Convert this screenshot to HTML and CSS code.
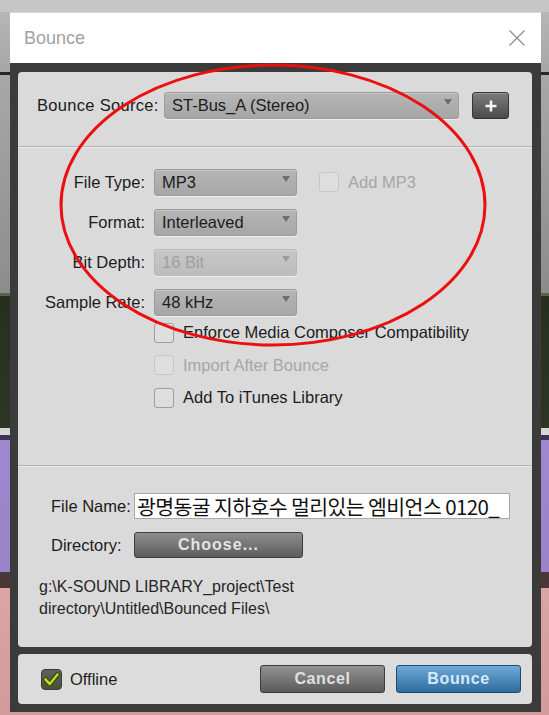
FILE: index.html
```html
<!DOCTYPE html>
<html lang="en">
<head>
<meta charset="utf-8">
<title>Bounce</title>
<link rel="stylesheet" href="styles.css">
</head>
<body>
<div class="window">
  <div class="titlebar">
    <span class="title">Bounce</span>
    <svg class="close" width="18" height="18" viewBox="0 0 18 18" aria-hidden="true">
      <path d="M1.5 1.5 L16.5 16.5 M16.5 1.5 L1.5 16.5" stroke="#8e8e8e" stroke-width="1.3" fill="none"/>
    </svg>
  </div>
  <div class="frame">
    <div class="panel">
      <section class="sec sec-source">
        <span class="src-label">Bounce Source:</span>
        <div class="select select-source"><span>ST-Bus_A (Stereo)</span><i class="arrow"></i></div>
        <button class="plus" type="button" aria-label="Add">
          <svg width="12" height="12" viewBox="0 0 12 12"><path d="M6 0.5 V11.5 M0.5 6 H11.5" stroke="#f4f4f4" stroke-width="2.6"/></svg>
        </button>
      </section>

      <section class="sec sec-format">
        <div class="grid">
          <span class="label">File Type:</span>
          <div class="select"><span>MP3</span><i class="arrow"></i></div>
          <label class="check check-inline disabled"><span class="box"></span>Add MP3</label>

          <span class="label">Format:</span>
          <div class="select"><span>Interleaved</span><i class="arrow"></i></div>
          <span></span>

          <span class="label">Bit Depth:</span>
          <div class="select is-disabled"><span>16 Bit</span><i class="arrow"></i></div>
          <span></span>

          <span class="label">Sample Rate:</span>
          <div class="select"><span>48 kHz</span><i class="arrow"></i></div>
          <span></span>
        </div>
        <div class="checks">
          <label class="check"><span class="box"></span>Enforce Media Composer Compatibility</label>
          <label class="check disabled"><span class="box"></span>Import After Bounce</label>
          <label class="check"><span class="box"></span>Add To iTunes Library</label>
        </div>
      </section>

      <section class="sec sec-file">
        <div class="file-row">
          <span class="file-label">File Name:</span>
          <div class="text-field">광명동굴 지하호수 멀리있는 엠비언스 0120_</div>
        </div>
        <div class="file-row">
          <span class="file-label">Directory:</span>
          <button class="btn btn-choose" type="button">Choose...</button>
        </div>
        <p class="path">g:\K-SOUND LIBRARY_project\Test<br>directory\Untitled\Bounced Files\</p>
      </section>
    </div>

    <div class="footer">
      <label class="offline">
        <span class="offline-box">
          <svg width="21" height="21" viewBox="0 0 21 21"><path d="M4.5 10.5 L8.8 15 L16.5 5.5" stroke="#2c3410" stroke-width="4.4" fill="none" stroke-linecap="round" stroke-linejoin="round"/><path d="M4.5 10.5 L8.8 15 L16.5 5.5" stroke="#b6e21c" stroke-width="2.6" fill="none" stroke-linecap="round" stroke-linejoin="round"/></svg>
        </span>
        Offline
      </label>
      <div class="actions">
        <button class="btn btn-cancel" type="button">Cancel</button>
        <button class="btn btn-bounce" type="button">Bounce</button>
      </div>
    </div>
  </div>
</div>

<svg class="annotation" width="549" height="715" viewBox="0 0 549 715" aria-hidden="true">
  <ellipse cx="273" cy="205" rx="212" ry="140" fill="none" stroke="#ec0f0f" stroke-width="3"/>
</svg>
</body>
</html>
```

FILE: styles.css
```css
* { box-sizing: border-box; }

html, body { margin: 0; }

body {
  position: relative;
  width: 549px;
  height: 715px;
  overflow: hidden;
  padding: 12px 8px 3px 10px;
  font-family: "Liberation Sans", Arial, sans-serif;
  font-size: 16.5px;
  color: #1c1c1c;
  /* session tracks peeking out behind the dialog */
  background: linear-gradient(to bottom,
    #c6c6c6 0 12px,
    #b6b6b6 12px, #a6a6a6 72px,
    #262626 72px 75px,
    #a8a8a8 75px, #8c8c8c 293px,
    #5a6450 293px 296px,
    #27301f 296px, #2d3525 428px,
    #d6d6d6 428px 435px,
    #3e3258 435px 440px,
    #9f88cf 440px, #9a83c8 572px,
    #4a3636 572px 588px,
    #dba5a5 588px, #d39a9a 715px);
}

.window {
  width: 531px;
  height: 700px;
  display: flex;
  flex-direction: column;
}

.titlebar {
  height: 51px;
  flex: none;
  background: #ffffff;
  border-top: 1px solid #d8d8d8;
  display: flex;
  align-items: center;
  justify-content: space-between;
  padding: 0 15px 0 14px;
}

.title {
  font-size: 18px;
  color: #a2a2a2;
}

.frame {
  flex: 1;
  background: #3b3b3b;
  padding: 9px 9px 8px 8px;
  display: flex;
  flex-direction: column;
  gap: 7px;
}

.panel {
  height: 575px;
  background: #dadada;
  border-radius: 4px;
}

.sec { border-bottom: 1px solid #b2b2b2; box-shadow: 0 1px 0 #ececec; }
.sec-file { border-bottom: 0; box-shadow: none; }

/* bounce source row */
.sec-source {
  height: 75px;
  padding: 20px 0 0 19px;
  display: flex;
  align-items: flex-start;
}
.src-label {
  width: 127px;
  line-height: 27px;
  letter-spacing: 0.3px;
}

.select {
  position: relative;
  height: 26.5px;
  width: 143px;
  padding: 0 20px 0 7px;
  display: flex;
  align-items: center;
  background: linear-gradient(#b6b6b6, #a6a6a6);
  border: 1px solid #9c9c9c;
  border-radius: 3px;
  box-shadow: inset 0 1px 0 rgba(255,255,255,.25), 0 1px 0 rgba(255,255,255,.55);
  color: #1c1c1c;
  white-space: nowrap;
}
.select-source { width: 295px; height: 27px; }
.select.is-disabled { background: linear-gradient(#c6c6c6, #bdbdbd); border-color: #b8b8b8; color: #9e9e9e; }
.select.is-disabled .arrow { border-top-color: #9a9a9a; }

.arrow {
  position: absolute;
  right: 6px;
  top: 6px;
  width: 0;
  height: 0;
  border-left: 4.5px solid transparent;
  border-right: 4.5px solid transparent;
  border-top: 6px solid #6e6e6e;
}

.plus {
  margin-left: 13px;
  width: 37px;
  height: 27px;
  padding: 0;
  border: 1px solid #363636;
  border-radius: 3px;
  background: linear-gradient(#7c7c7c, #4a4a4a);
  box-shadow: inset 0 1px 0 rgba(255,255,255,.2);
  display: flex;
  align-items: center;
  justify-content: center;
}

/* file format block */
.sec-format {
  height: 319px;
  padding-top: 22px;
}
.grid {
  display: grid;
  grid-template-columns: 127px 143px auto;
  column-gap: 9px;
  row-gap: 13.5px;
  grid-auto-rows: 26.5px;
  align-items: center;
}
.label { text-align: right; }
.check-inline { margin-left: 13px; }

.checks {
  margin-top: 7px;
  padding-left: 136px;
  display: flex;
  flex-direction: column;
  gap: 12.5px;
}

.check {
  display: flex;
  align-items: center;
  gap: 9px;
  height: 20px;
  white-space: nowrap;
}
.box {
  width: 20px;
  height: 20px;
  flex: none;
  border: 1px solid #9e9e9e;
  border-radius: 3px;
  background: #dedede;
}
.check.disabled { color: #a6a6a6; }
.check.disabled .box { border-color: #c6c6c6; }

/* destination block */
.sec-file {
  padding: 27px 0 0 0;
}
.file-row {
  display: flex;
  align-items: center;
  height: 26px;
  margin-bottom: 13px;
}
.file-label {
  width: 116px;
  padding-left: 33px;
}
.text-field {
  width: 376px;
  height: 26px;
  background: #ffffff;
  border: 1px solid #a8a8a8;
  padding: 0 2px;
  font-family: "Noto Sans CJK KR", "Noto Sans", sans-serif;
  font-size: 20.5px;
  letter-spacing: -0.6px;
  line-height: 24px;
  color: #111;
  white-space: nowrap;
}

.btn {
  font-family: "Liberation Sans", Arial, sans-serif;
  font-size: 16px;
  font-weight: bold;
  padding: 0;
  border-radius: 3px;
}
.btn-choose {
  width: 169px;
  height: 26px;
  border: 1px solid #3e3e3e;
  background: linear-gradient(#8e8e8e, #5c5c5c);
  color: #e4e4e4;
  letter-spacing: 1px;
}

.path {
  margin: 18px 0 0;
  padding-left: 21px;
  font-size: 16px;
  line-height: 22px;
  color: #262626;
}

/* bottom bar */
.footer {
  height: 50px;
  background: #dcdcdc;
  border-radius: 4px;
  display: flex;
  align-items: center;
  justify-content: space-between;
  padding: 0 11px 0 23px;
}
.offline {
  display: flex;
  align-items: center;
  gap: 8px;
  color: #1c1c1c;
}
.offline-box {
  width: 21px;
  height: 21px;
  border-radius: 4px;
  background: linear-gradient(#5d6258, #4a5234);
  border: 1px solid #3a3a3a;
  display: flex;
}
.offline-box svg { margin: -1px; }

.actions { display: flex; gap: 11px; }
.btn-cancel, .btn-bounce {
  width: 125px;
  height: 28px;
  letter-spacing: 0.6px;
}
.btn-cancel {
  border: 1px solid #3c3c3c;
  background: linear-gradient(#929292, #5a5a5a);
  color: #e0e0e0;
}
.btn-bounce {
  border: 1px solid #1d4a70;
  background: linear-gradient(#6eaad8, #2f6d9f);
  color: #d4eaf8;
}

/* red markup ring drawn on top of the dialog */
.annotation {
  position: absolute;
  left: 0;
  top: 0;
  pointer-events: none;
}
```
